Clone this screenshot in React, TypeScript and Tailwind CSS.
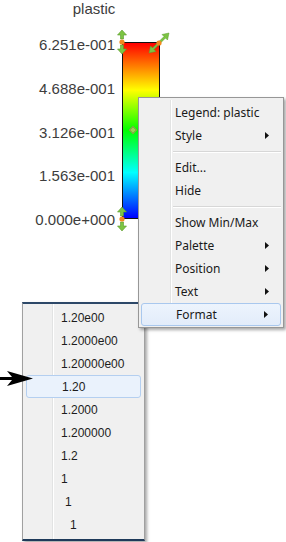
import React from "react";

const labels = ["6.251e-001", "4.688e-001", "3.126e-001", "1.563e-001", "0.000e+000"];

type Item = { label: string; arrow?: boolean; active?: boolean } | "sep";

const mainItems: Item[] = [
  { label: "Legend: plastic" },
  { label: "Style", arrow: true },
  "sep",
  { label: "Edit..." },
  { label: "Hide" },
  "sep",
  { label: "Show Min/Max" },
  { label: "Palette", arrow: true },
  { label: "Position", arrow: true },
  { label: "Text", arrow: true },
  { label: "Format", arrow: true, active: true },
];

const formatItems = [
  { label: "1.20e00", pad: "pl-[35px]" },
  { label: "1.2000e00", pad: "pl-[35px]" },
  { label: "1.20000e00", pad: "pl-[35px]" },
  { label: "1.20", pad: "pl-[35px]", active: true },
  { label: "1.2000", pad: "pl-[35px]" },
  { label: "1.200000", pad: "pl-[35px]" },
  { label: "1.2", pad: "pl-[35px]" },
  { label: "1", pad: "pl-[35px]" },
  { label: "1", pad: "pl-[39px]" },
  { label: "1", pad: "pl-[44px]" },
];

function SubArrow() {
  return (
    <svg width="4" height="7" viewBox="0 0 4 7" className="shrink-0">
      <path d="M0 0 L4 3.5 L0 7 Z" fill="#111" />
    </svg>
  );
}

// green resize arrows with the orange grip dot
function VHandle() {
  return (
    <svg width="12" height="26" viewBox="0 0 12 26">
      <path d="M6 1 L10.5 6 L7.5 6 L7.5 10 L4.5 10 L4.5 6 L1.5 6 Z" fill="#7cc443" stroke="#5a9a2c" strokeWidth="0.6" />
      <path d="M6 25 L10.5 20 L7.5 20 L7.5 16 L4.5 16 L4.5 20 L1.5 20 Z" fill="#7cc443" stroke="#5a9a2c" strokeWidth="0.6" />
      <circle cx="6" cy="13" r="2.6" fill="#f28a1e" />
    </svg>
  );
}

function DiagHandle() {
  return (
    <svg width="24" height="24" viewBox="0 0 24 24">
      <path d="M22 2 L20.5 9 L18.5 7 L14 11.5 L12.5 10 L17 5.5 L15 3.5 Z" fill="#7cc443" stroke="#5a9a2c" strokeWidth="0.5" />
      <path d="M2 22 L3.5 15 L5.5 17 L10 12.5 L11.5 14 L7 18.5 L9 20.5 Z" fill="#7cc443" stroke="#5a9a2c" strokeWidth="0.5" />
      <circle cx="12" cy="12" r="2.6" fill="#f28a1e" />
    </svg>
  );
}

export default function App() {
  return (
    <div className="relative w-[286px] h-[542px] bg-white overflow-hidden font-['Liberation_Sans',Arial,sans-serif]">
      {/* legend */}
      <div className="flex flex-col text-[#3d3d3d] text-[15px]">
        <div className="w-[188px] text-center leading-[17px]">plastic</div>
        <div className="flex items-start mt-[20px]">
          <div className="w-[115px] h-[191px] flex flex-col justify-between text-right leading-[16px]">
            {labels.map((l) => (
              <div key={l}>{l}</div>
            ))}
          </div>
          <div className="relative ml-[7px] mt-[5px] w-[38px] h-[177px] border border-[#111] bg-[linear-gradient(to_bottom,#ff0000_0%,#ffff00_27%,#00ff00_50%,#00ffff_74%,#0000ff_100%)]">
            <div className="absolute left-[-7px] top-[-14px]">
              <VHandle />
            </div>
            <div className="absolute right-[-12px] top-[-12px]">
              <DiagHandle />
            </div>
            <div className="absolute left-[-7px] bottom-[-14px]">
              <VHandle />
            </div>
            <div className="absolute left-[7px] top-[84px] w-[6px] h-[6px] rotate-45 bg-[#9fcf5a] border border-[#6fa83a]" />
          </div>
        </div>
      </div>

      {/* Format submenu */}
      <div className="absolute left-[22px] top-[302px] w-[123px] h-[239px] bg-[#f0f0f0] border-x border-x-[#a0a0a0] border-t-2 border-t-[#2d4868] border-b-2 border-b-[#1e3a5a] shadow-[2px_2px_3px_rgba(0,0,0,0.35)] pt-[2px] font-['Liberation_Sans',Arial,sans-serif] text-[12px] text-[#1c1c1c]">
        <div className="absolute left-[29px] top-0 bottom-0 w-[2px] border-l border-l-[#e2e3e3] border-r border-r-white" />
        {formatItems.map((it, i) => (
          <div
            key={i}
            className={`relative h-[23px] mx-[3px] flex items-center rounded-[3px] ${it.pad} ${
              it.active ? "bg-[#eaf2fc] border border-[#b4cff0] pl-[34px]" : ""
            }`}
          >
            {it.label}
          </div>
        ))}
      </div>

      {/* main context menu */}
      <div className="absolute left-[138px] top-[97px] w-[146px] bg-[#f0f0f0] border border-[#979797] shadow-[2px_2px_3px_rgba(0,0,0,0.35)] pt-[3px] pb-[1px] font-['Noto_Sans','Open_Sans',sans-serif] text-[12px] text-[#1a1a1a]">
        <div className="absolute left-[31px] top-[2px] bottom-[2px] w-[2px] border-l border-l-[#e2e3e3] border-r border-r-white" />
        {mainItems.map((it, i) =>
          it === "sep" ? (
            <div key={i} className="h-[9px] pl-[34px] pr-[2px] flex items-center">
              <div className="w-full h-[2px] border-t border-t-[#d7d7d7] border-b border-b-white" />
            </div>
          ) : (
            <div
              key={i}
              className={`relative h-[23px] mx-[2px] pl-[34px] pr-[12px] flex items-center justify-between rounded-[3px] ${
                it.active ? "bg-[linear-gradient(to_bottom,#edf4fd,#e2ecfa)] border border-[#a9c8ee] pl-[33px] pr-[11px]" : ""
              }`}
            >
              <span>{it.label}</span>
              {it.arrow && <SubArrow />}
            </div>
          )
        )}
      </div>

      {/* pointer arrow */}
      <svg className="absolute left-0 top-[370px]" width="34" height="17" viewBox="0 0 34 17">
        <path d="M0 7 L12 7 L7 1 L33 8.5 L7 16 L12 10 L0 10 Z" fill="#000" />
      </svg>
    </div>
  );
}
